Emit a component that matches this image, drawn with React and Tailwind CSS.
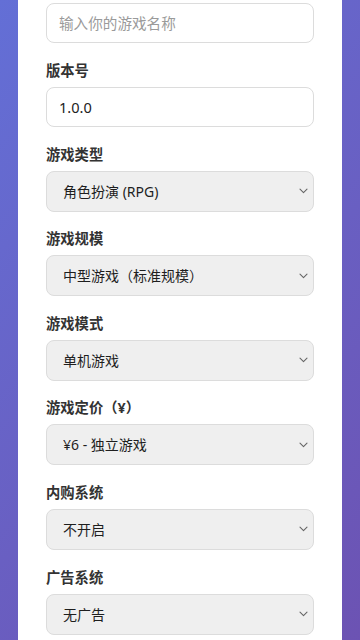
import { useState } from "react";

const fields = [
  {
    label: "游戏类型",
    value: "rpg",
    options: [
      ["rpg", "角色扮演 (RPG)"],
      ["act", "动作游戏 (ACT)"],
      ["slg", "策略游戏 (SLG)"],
    ],
  },
  {
    label: "游戏规模",
    value: "mid",
    options: [
      ["small", "小型游戏（独立规模）"],
      ["mid", "中型游戏（标准规模）"],
      ["big", "大型游戏（3A规模）"],
    ],
  },
  {
    label: "游戏模式",
    value: "single",
    options: [
      ["single", "单机游戏"],
      ["online", "网络游戏"],
    ],
  },
  {
    label: "游戏定价（¥）",
    value: "6",
    options: [
      ["0", "¥0 - 免费游戏"],
      ["6", "¥6 - 独立游戏"],
      ["68", "¥68 - 标准游戏"],
    ],
  },
  {
    label: "内购系统",
    value: "off",
    options: [
      ["off", "不开启"],
      ["on", "开启"],
    ],
  },
  {
    label: "广告系统",
    value: "none",
    options: [
      ["none", "无广告"],
      ["some", "少量广告"],
    ],
  },
];

const Chevron = () => (
  <svg
    width="9"
    height="6"
    viewBox="0 0 9 6"
    fill="none"
    className="pointer-events-none absolute right-[6px] top-1/2 -translate-y-1/2"
  >
    <path d="M1 1.2 4.5 4.6 8 1.2" stroke="#666" strokeWidth="1.1" strokeLinecap="round" strokeLinejoin="round" />
  </svg>
);

const App = () => {
  const [name, setName] = useState("");
  const [version, setVersion] = useState("1.0.0");
  const [values, setValues] = useState(fields.map((f) => f.value));

  // update one select value
  const handleSelect = (index, e) => {
    const { value } = e.target;
    setValues((prev) => {
      const next = [...prev];
      next[index] = value;
      return next;
    });
  };

  return (
    <div
      className="min-h-[640px] bg-linear-135 from-[#636fd6] to-[#6c52b2] px-[18px]"
      style={{ fontFamily: '"Noto Sans", "Noto Sans CJK SC", sans-serif' }}
    >
      <div className="min-h-[640px] bg-white px-[28px] pt-[3px] pb-6">
        <input
          type="text"
          value={name}
          onChange={(e) => setName(e.target.value)}
          placeholder="输入你的游戏名称"
          className="block h-[40px] w-full rounded-[8px] border border-[#dcdcdc] bg-white px-[12px] text-[14.6px] text-[#222] outline-none placeholder:text-[#9a9a9a]"
        />

        <div className="mt-[19px]">
          <label className="mb-[7px] block text-[14.3px] font-bold leading-[18px] text-[#333]">
            版本号
          </label>
          <input
            type="text"
            value={version}
            onChange={(e) => setVersion(e.target.value)}
            className="block h-[40px] w-full rounded-[8px] border border-[#dcdcdc] bg-white px-[12px] text-[14.6px] text-[#222] outline-none"
          />
        </div>

        {fields.map((field, index) => (
          <div key={field.label} className="mt-[18.6px]">
            <label className="mb-[7px] block text-[14.3px] font-bold leading-[18px] text-[#333]">
              {field.label}
            </label>
            <div className="relative">
              <select
                value={values[index]}
                onChange={(e) => handleSelect(index, e)}
                className="block h-[41px] w-full appearance-none rounded-[8px] border border-[#dcdcdc] bg-[#efefef] pl-[16px] pr-[24px] text-[14px] text-[#1e1e1e] outline-none"
              >
                {field.options.map(([v, text]) => (
                  <option key={v} value={v}>
                    {text}
                  </option>
                ))}
              </select>
              <Chevron />
            </div>
          </div>
        ))}
      </div>
    </div>
  );
};

export default App;
